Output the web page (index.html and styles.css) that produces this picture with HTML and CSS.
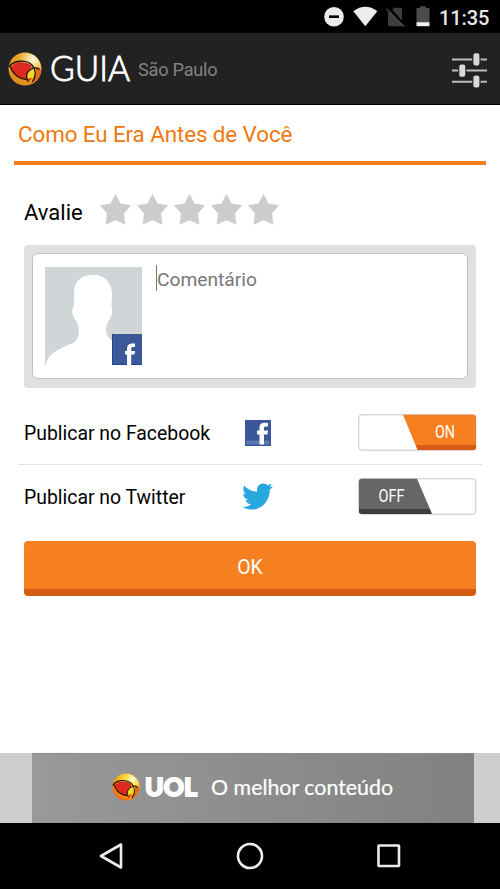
FILE: index.html
```html
<!DOCTYPE html>
<html lang="pt-BR">
<head>
<meta charset="utf-8">
<title>Guia UOL</title>
<link rel="stylesheet" href="styles.css">
</head>
<body>
<svg class="defs" width="0" height="0">
  <defs>
    <radialGradient id="gold" cx=".74" cy=".22" r=".85"><stop offset="0" stop-color="#fffbe6"/><stop offset=".2" stop-color="#f9dd92"/><stop offset=".5" stop-color="#eda62b"/><stop offset="1" stop-color="#e28a22"/></radialGradient>
    <radialGradient id="vivid" cx=".74" cy=".22" r=".85"><stop offset="0" stop-color="#fffef0"/><stop offset=".2" stop-color="#ffe560"/><stop offset=".6" stop-color="#fbb514"/><stop offset="1" stop-color="#f06a10"/></radialGradient>
    <symbol id="orb" viewBox="0 0 34 34">
      <circle cx="17" cy="17" r="16.500"/>
      <path d="M28 15Q33 15 33 20Q31 29 22 32.500Q29 25 28 15Z" fill="#e46a1e"/>
      <path d="M3.500 14.500C8 9.500 17 9 22.500 13C26 16 21 17 19.500 21L18.500 27C10 27.500 4 22 3.500 14.500Z" fill="#dc2a20"/>
      <path d="M1 15C5 8.500 17 7 23.500 12.500C28 17 28.500 24 24.500 30M2.500 14C3.500 20 9 26.500 18.500 27.500" fill="none" stroke="#17120c" stroke-width="1.300"/>
      <path d="M25 16.500C28 21 26 27.500 20.500 30C17 25.500 18.500 19 25 16.500Z" fill="#f3d524"/>
      <path d="M31.500 17.500Q27.500 14.500 23.500 17C18.500 19.500 17 25 20.500 30" fill="none" stroke="#17120c" stroke-width="1.200"/>
      <path d="M19.500 26.500L25 26L20.700 29.800Z" fill="#d93720"/>
    </symbol>
    <symbol id="star" viewBox="0 0 31 31"><path d="M15.500 .3L20.400 9.800L30.700 11.500L23.800 19.200L25.100 30.300L15.500 26L5.900 30.300L7.200 19.200L.3 11.500L10.600 9.800Z" fill="#ccc" stroke="#ccc" stroke-width=".5"/></symbol>
  </defs>
</svg>
<main class="screen">
  <div class="status">
    <svg width="110" height="22" viewBox="0 0 110 22">
      <circle cx="11" cy="10.700" r="9.800" fill="#ececec"/><path d="M6 10.700H16" stroke="#000" stroke-width="2.600"/>
      <path d="M30.300 5.200Q42.500 -3.700 54.300 5.200L42.300 20.300Z" fill="#ececec"/>
      <path d="M65 7L71.500 1.700H77.500Q79 1.700 79 3.300V20.200H66.500Q65 20.200 65 18.500Z" fill="#3e3e3e"/><path d="M65 1L82 20.500" stroke="#000" stroke-width="3"/><path d="M63.500 3L81 20.500" stroke="#464646" stroke-width="1.600"/>
      <path d="M93.500 2H97V.2H103V2H106.500V16.200H93.500Z" fill="#4b4b4b"/><path d="M93.500 16.200H106.500V20.200H93.500Z" fill="#efefef"/>
    </svg>
    <span class="clock">11:35</span>
  </div>
  <header class="header">
    <svg class="logo" width="34" height="34" fill="url(#gold)"><use href="#orb"/></svg>
    <svg class="guia" width="82" height="48"><text x="0" y="35.500" textLength="80" lengthAdjust="spacingAndGlyphs">GUIA</text></svg>
    <span class="city">São Paulo</span>
    <svg class="tune" width="36" height="36" viewBox="0 0 36 36"><path d="M0 7.500H35M0 18.500H35M0 29.700H35" stroke="#bcbcbc" stroke-width="2"/><g fill="#d8d8d8" stroke="#222" stroke-width="1.200"><rect x="20.800" y=".7" width="7.200" height="13.500" rx="2.600"/><rect x="6.700" y="11.900" width="7.200" height="13.500" rx="2.600"/><rect x="20.800" y="23" width="7.200" height="13" rx="2.600"/></g></svg>
  </header>
  <h1 class="title">Como Eu Era Antes de Você</h1>
  <div class="rating">
    <span class="rate-label">Avalie</span>
    <div class="stars"><svg width="31" height="31"><use href="#star"/></svg><svg width="31" height="31"><use href="#star"/></svg><svg width="31" height="31"><use href="#star"/></svg><svg width="31" height="31"><use href="#star"/></svg><svg width="31" height="31"><use href="#star"/></svg></div>
  </div>
  <div class="comment">
    <div class="field">
      <svg width="97" height="98" viewBox="0 0 97 98">
        <rect width="97" height="98" fill="#d0d5d8"/>
        <path d="M1 98C3 85 17 81 28 76C35 72 35 62 32 55C28 51 26 44 28 41C30 38 29 34 29 25C30 12 38 8 48 8C60 8 66 15 67 26C67 34 66 37 67 41C68 47 65 52 63 55C60 62 60 68 66 73C80 80 95 82 97 98Z" fill="#fff"/>
        <rect x="67" y="67" width="30" height="31" fill="#3b5998"/><path d="M67.500 67V97.500H97" fill="none" stroke="#174694"/>
        <path d="M82 98V87.500H80V84H82V82C82 77.500 84.500 76 90 76.500V80C87 79.700 86.200 80 86.200 82V84H90L89.500 87.500H86.200V98Z" fill="#fff"/>
      </svg>
      <div class="input"><i class="caret"></i>Comentário</div>
    </div>
  </div>
  <div class="row">
    <span class="label">Publicar no Facebook</span>
    <svg class="fb" width="26" height="26" viewBox="0 0 26 26"><rect width="26" height="26" fill="#39579a"/><rect x="1.500" y="20.500" width="23" height="4" fill="#5e77ae"/><path d="M14.500 24.500V14.500H12V10.500H14.500V8C14.500 3.500 17 2 23 3V6.600C20 6.200 19 6.500 19 8.500V10.500H23L22.400 14.500H19V24.500Z" fill="#fff"/></svg>
    <svg class="toggle" width="119" height="37" viewBox="0 0 119 37"><rect x=".8" y=".8" width="117" height="35.400" rx="3" fill="#fff" stroke="#c5c5c5"/><path d="M45 .8H115.500Q118 .8 118 3.300V31H57.500Z" fill="#f67f20"/><path d="M57.500 31H118V33.500Q118 36 115.500 36H59.500Z" fill="#d85a12"/><text x="77" y="23.500" textLength="20" lengthAdjust="spacingAndGlyphs">ON</text></svg>
  </div>
  <div class="row second">
    <span class="label">Publicar no Twitter</span>
    <svg class="tw" width="31" height="27" viewBox="0 0 31 27"><path d="M31 3.200C30 4.800 29 5.800 27.800 6.500C28.200 17 20 27 9.500 26.500C6 26.500 3 25.500 .3 23.800C4 24.200 7 23.200 9.300 21.300C6.500 21.200 4.500 19.500 3.600 16.900H6.200C3 15.800 1.400 13.700 1.300 10.600L4 11.300C1.200 9 .7 5.400 2.200 2.400C5.500 6.200 10 8.500 15.200 8.800C14 3.500 17.500 .4 21.200 .4C23 .4 24.600 1.100 25.800 2.300L29.700 .8C29.200 2.200 28.500 3.200 27.200 4Z" fill="#29a7df"/></svg>
    <svg class="toggle" width="119" height="37" viewBox="0 0 119 37"><rect x=".8" y=".8" width="117" height="35.400" rx="3" fill="#fff" stroke="#c5c5c5"/><path d="M3.500 .8H59L72 31H1V3.300Q1 .8 3.500 .8Z" fill="#666"/><path d="M1 31H72L74 36H3.500Q1 36 1 33.500Z" fill="#3d3d3d"/><text x="20.500" y="23.500" textLength="26" lengthAdjust="spacingAndGlyphs">OFF</text></svg>
  </div>
  <div class="ok">OK</div>
  <div class="banner">
    <div class="ad">
      <svg class="ball" width="28" height="28" fill="url(#vivid)"><use href="#orb"/></svg>
      <svg class="adtext" width="260" height="34"><text class="uol" x="4" y="24.500" textLength="52" lengthAdjust="spacingAndGlyphs">UOL</text><text class="slogan" x="70" y="24" textLength="182" lengthAdjust="spacingAndGlyphs">O melhor conteúdo</text></svg>
    </div>
  </div>
  <nav class="nav">
    <svg width="24" height="28" viewBox="0 0 24 28"><path d="M22 2.500V25.500L2 14Z"/></svg>
    <svg width="28" height="28" viewBox="0 0 28 28"><circle cx="14" cy="14" r="12"/></svg>
    <svg width="24" height="28" viewBox="0 0 24 28"><rect x="1.500" y="3.500" width="20.500" height="20.500" rx=".5"/></svg>
  </nav>
</main>
</body>
</html>
```
FILE: styles.css
```css
* { box-sizing: border-box; }
body { margin: 0; background: #fff; font-family: Roboto, "Liberation Sans", sans-serif; color: #000; }
svg { display: block; flex: none; }
.defs { position: absolute; }
.screen { width: 500px; height: 889px; display: flex; flex-direction: column; overflow: hidden; }
.screen > * { flex: none; }
.status { height: 33px; background: #000; display: flex; align-items: center; padding: 1px 11px 0 323px; }
.clock { margin-left: 6px; color: #e6e6e6; font-size: 20px; font-weight: 500; line-height: 24px; letter-spacing: -.1px; white-space: nowrap; padding-top: 1px; }
.header { height: 72px; background: #222; border-bottom: 1px solid #000; display: flex; align-items: center; padding-left: 8px; }
.logo { margin-top: 1px; }
.guia { margin-left: 8px; }
.guia text { font: 300 35px Lato, sans-serif; fill: #fff; stroke: #fff; stroke-width: .9; }
.city { font-size: 18.2px; color: #838383; margin-left: 6px; letter-spacing: -.25px; margin-top: 2px; }
.tune { margin: 2px 12px 0 auto; }
.title { margin: 0 14px; height: 60px; border-bottom: 4px solid #fa7d1b; padding: 1px 4px 0; font-size: 22.4px; line-height: 57px; font-weight: 400; color: #ef780e; letter-spacing: -.1px; white-space: nowrap; }
.rating { height: 80px; padding: 13px 24px 0; display: flex; align-items: center; }
.rate-label { width: 75.5px; font-size: 22px; padding-top: 1px; }
.stars { display: flex; gap: 6px; margin-top: -4px; }
.comment { height: 143px; margin: 0 24px; padding: 8px; background: #e0e0e0; border-radius: 4px; }
.field { height: 126px; background: #fff; border: 1.500px solid #c1c1c1; border-radius: 6px; padding: 13px 12px 12px; display: flex; }
.input { display: flex; margin-left: 14px; color: #777; font-size: 19.2px; line-height: 26px; }
.caret { width: 1px; height: 26px; background: #777; margin-top: -2px; }
.row { height: 77px; margin: 0 18px; padding: 0 5px 0 6px; border-bottom: 1px solid #e3e3e3; display: flex; align-items: center; padding-top: 15px; }
.second { height: 64px; border: 0; padding-top: 0; }
.label { width: 221px; font-size: 19.4px; white-space: nowrap; }
.fb { margin-top: -1px; }
.tw { margin: -2px 0 0 -3px; }
.toggle { margin: -2px 0 0 auto; }
.toggle text { font: 18px Roboto, sans-serif; fill: #fff; }
.ok { height: 55px; margin: 12px 24px 0; background: #f67f20; border-bottom: 7px solid #d55a12; border-radius: 4px; color: #fff; font-size: 19.5px; line-height: 54px; text-align: center; }
.banner { height: 70px; margin-top: auto; background: #cecece; padding: 0 26px 0 32px; }
.ad { height: 70px; display: flex; align-items: center; padding-left: 80px; background: linear-gradient(90deg, #999, #818181); border-top: 1px solid #888; }
.ball { margin-top: -3px; }
.adtext { margin: -2px 0 0 1px; }
.uol { font: 900 24px Lato, sans-serif; fill: #fff; stroke: #fff; stroke-width: 1.8; }
.slogan { font: 20.5px Lato, sans-serif; fill: #fff; stroke: #fff; stroke-width: .2; }
.nav { height: 66px; background: #000; display: flex; justify-content: space-between; align-items: center; padding: 0 99px; }
.nav path, .nav circle, .nav rect { fill: none; stroke: #ececec; stroke-width: 2.6; stroke-linejoin: round; }
```
